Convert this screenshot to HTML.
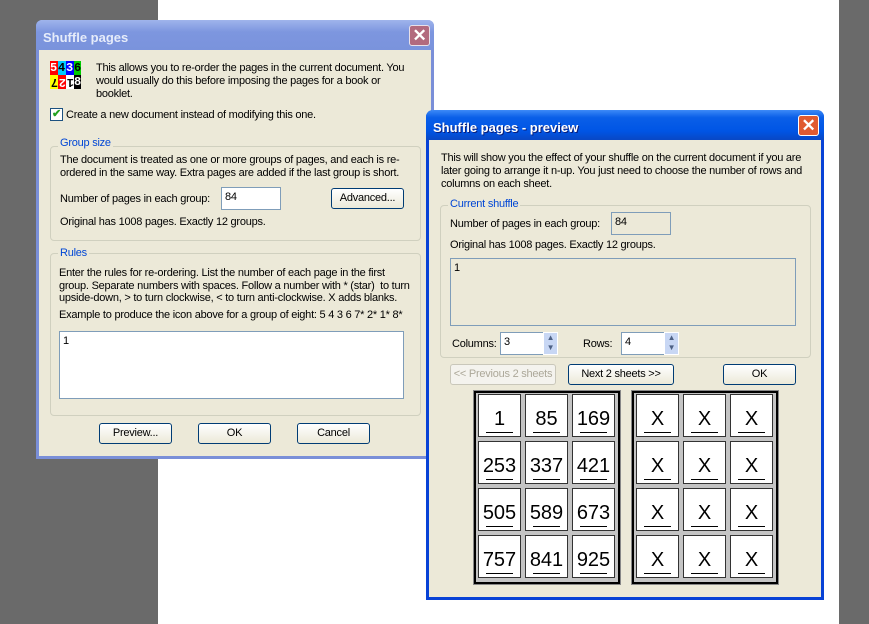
<!DOCTYPE html>
<html><head><style>
*{margin:0;padding:0;box-sizing:border-box}
body{width:869px;height:624px;position:relative;overflow:hidden;background:#fff;font-family:"Liberation Sans",sans-serif;font-size:11px;letter-spacing:-0.24px;color:#000}
.a{position:absolute;white-space:nowrap}
.dlg{position:absolute;background:#ece9d8}
.btn{position:absolute;border:1px solid #003c74;border-radius:3px;background:linear-gradient(#fff,#ece9d8);text-align:center;line-height:19px;font-size:11px}
.grp{position:absolute;border:1px solid #d0d0bf;border-radius:4px}
.leg{position:absolute;background:#ece9d8;color:#0046d5;padding:0 2px;font-size:11px}
.inp{position:absolute;background:#fff;border:1px solid #7f9db9;padding:3px 3px}
.cell{position:absolute;width:43px;height:43px;background:#fff;border:1px solid #333;font-size:20px;letter-spacing:0;text-align:center;line-height:48px}
.cell:after{content:"";position:absolute;left:7px;right:7px;top:37px;border-top:1px solid #000}
.grid{position:absolute;background:#c4c4c4;border:2px solid #000;outline:1px solid #888}
</style></head><body>
<div class="a" style="left:0;top:0;width:158px;height:624px;background:#6a6a6a"></div>
<div class="a" style="left:839px;top:0;width:30px;height:624px;background:#6a6a6a"></div>

<!-- dialog 1 -->
<div class="dlg" style="left:36px;top:20px;width:398px;height:439px;border:3px solid #7a8fd8;border-top:none;border-radius:6px 6px 0 0">
 <div class="a" style="left:-3px;top:0;width:398px;height:30px;background:linear-gradient(#9fb4ec,#7d96df 40%,#7a93dc);border-radius:6px 6px 0 0"></div>
 <div class="a" style="left:4px;top:10px;color:#e6ecfa;font-weight:bold;font-size:13px;letter-spacing:0">Shuffle pages</div>
 <div class="a" style="left:370px;top:5px;width:21px;height:21px;border:1px solid #e8e0e8;border-radius:3px;background:#b26a7e;color:#fff;text-align:center;font-size:17px;line-height:19px;font-weight:bold">✕</div>
</div>
<div class="a" style="left:50px;top:61px;width:31px;height:29px;font-family:'Liberation Mono',monospace;font-weight:bold;font-size:12px;letter-spacing:0;line-height:14px">
<div style="display:flex"><span style="background:#f00;color:#fff;width:8px">5</span><span style="background:#0cf;width:8px">4</span><span style="background:#00f;color:#fff;width:8px">3</span><span style="background:#0c0;width:7px">6</span></div>
<div style="display:flex"><span style="background:#ff0;width:8px;transform:rotate(180deg)">7</span><span style="background:#f00;color:#fff;width:8px;transform:rotate(180deg)">2</span><span style="background:#fff;width:8px;transform:rotate(180deg)">1</span><span style="background:#000;color:#fff;width:7px">8</span></div></div>
<div class="a" style="left:96px;top:62px;line-height:13px">This allows you to re-order the pages in the current document. You<br>would usually do this before imposing the pages for a book or<br>booklet.</div>
<div class="a" style="left:50px;top:108px;width:13px;height:13px;background:#fff;border:1px solid #1c5180;color:#21a121;font-size:11px;line-height:11px;text-align:center;font-weight:bold">✔</div>
<div class="a" style="left:66px;top:109px">Create a new document instead of modifying this one.</div>

<div class="grp" style="left:50px;top:146px;width:371px;height:95px"></div>
<div class="leg" style="left:58px;top:137px">Group size</div>
<div class="a" style="left:60px;top:153px;line-height:13px;padding-top:1px">The document is treated as one or more groups of pages, and each is re-<br>ordered in the same way. Extra pages are added if the last group is short.</div>
<div class="a" style="left:60px;top:193px">Number of pages in each group:</div>
<div class="inp" style="left:221px;top:187px;width:60px;height:23px">84</div>
<div class="btn" style="left:331px;top:188px;width:73px;height:21px">Advanced...</div>
<div class="a" style="left:60px;top:216px">Original has 1008 pages. Exactly 12 groups.</div>

<div class="grp" style="left:50px;top:253px;width:371px;height:163px"></div>
<div class="leg" style="left:58px;top:247px">Rules</div>
<div class="a" style="left:59px;top:267px;line-height:12.7px">Enter the rules for re-ordering. List the number of each page in the first<br>group. Separate numbers with spaces. Follow a number with * (star)&nbsp; to turn<br>upside-down, &gt; to turn clockwise, &lt; to turn anti-clockwise. X adds blanks.</div>
<div class="a" style="left:59px;top:309px">Example to produce the icon above for a group of eight: 5 4 3 6 7* 2* 1* 8*</div>
<div class="inp" style="left:59px;top:331px;width:345px;height:68px">1</div>
<div class="btn" style="left:99px;top:423px;width:73px;height:21px">Preview...</div>
<div class="btn" style="left:198px;top:423px;width:73px;height:21px">OK</div>
<div class="btn" style="left:297px;top:423px;width:73px;height:21px">Cancel</div>

<!-- dialog 2 -->
<div class="dlg" style="left:426px;top:110px;width:398px;height:490px;border:3px solid #0842d6;border-top:none;border-radius:7px 7px 0 0">
 <div class="a" style="left:-3px;top:0;width:398px;height:30px;background:linear-gradient(#3d8af7,#0a5fe8 25%,#0055e5 70%,#0847c4);border-radius:7px 7px 0 0"></div>
 <div class="a" style="left:4px;top:10px;color:#fff;font-weight:bold;font-size:13px;letter-spacing:0;text-shadow:1px 1px #0a1e7a">Shuffle pages - preview</div>
 <div class="a" style="left:369px;top:5px;width:21px;height:21px;border:1px solid #fff;border-radius:3px;background:#e05a30;color:#fff;text-align:center;font-size:17px;line-height:19px;font-weight:bold">✕</div>
</div>
<div class="a" style="left:441px;top:152px;line-height:13px">This will show you the effect of your shuffle on the current document if you are<br>later going to arrange it n-up. You just need to choose the number of rows and<br>columns on each sheet.</div>
<div class="grp" style="left:440px;top:205px;width:371px;height:153px"></div>
<div class="leg" style="left:448px;top:198px">Current shuffle</div>
<div class="a" style="left:450px;top:218px">Number of pages in each group:</div>
<div class="inp" style="left:611px;top:212px;width:60px;height:23px;background:#ece9d8">84</div>
<div class="a" style="left:450px;top:239px">Original has 1008 pages. Exactly 12 groups.</div>
<div class="inp" style="left:450px;top:258px;width:346px;height:68px;background:#ece9d8">1</div>
<div class="a" style="left:452px;top:338px">Columns:</div>
<div class="inp" style="left:500px;top:332px;width:44px;height:23px">3</div>
<div class="a" style="left:543px;top:332px;width:15px;height:23px;background:#c8d7f4;border:1px solid #fff;color:#4d6185;font-size:8px;line-height:10px;text-align:center">▲<br>▼</div>
<div class="a" style="left:583px;top:338px">Rows:</div>
<div class="inp" style="left:621px;top:332px;width:44px;height:23px">4</div>
<div class="a" style="left:664px;top:332px;width:15px;height:23px;background:#c8d7f4;border:1px solid #fff;color:#4d6185;font-size:8px;line-height:10px;text-align:center">▲<br>▼</div>
<div class="btn" style="left:450px;top:364px;width:106px;height:21px;border-color:#c9c7ba;color:#aca899;background:#f4f3ee">&lt;&lt; Previous 2 sheets</div>
<div class="btn" style="left:568px;top:364px;width:106px;height:21px">Next 2 sheets &gt;&gt;</div>
<div class="btn" style="left:723px;top:364px;width:73px;height:21px">OK</div>

<div class="grid" style="left:474px;top:391px;width:146px;height:193px"></div>
<div class="grid" style="left:632px;top:391px;width:146px;height:193px"></div>
<div class="cell" style="left:478px;top:394px">1</div><div class="cell" style="left:525px;top:394px">85</div><div class="cell" style="left:572px;top:394px">169</div>
<div class="cell" style="left:478px;top:441px">253</div><div class="cell" style="left:525px;top:441px">337</div><div class="cell" style="left:572px;top:441px">421</div>
<div class="cell" style="left:478px;top:488px">505</div><div class="cell" style="left:525px;top:488px">589</div><div class="cell" style="left:572px;top:488px">673</div>
<div class="cell" style="left:478px;top:535px">757</div><div class="cell" style="left:525px;top:535px">841</div><div class="cell" style="left:572px;top:535px">925</div>
<div class="cell" style="left:636px;top:394px">X</div><div class="cell" style="left:683px;top:394px">X</div><div class="cell" style="left:730px;top:394px">X</div>
<div class="cell" style="left:636px;top:441px">X</div><div class="cell" style="left:683px;top:441px">X</div><div class="cell" style="left:730px;top:441px">X</div>
<div class="cell" style="left:636px;top:488px">X</div><div class="cell" style="left:683px;top:488px">X</div><div class="cell" style="left:730px;top:488px">X</div>
<div class="cell" style="left:636px;top:535px">X</div><div class="cell" style="left:683px;top:535px">X</div><div class="cell" style="left:730px;top:535px">X</div>
</body></html>
